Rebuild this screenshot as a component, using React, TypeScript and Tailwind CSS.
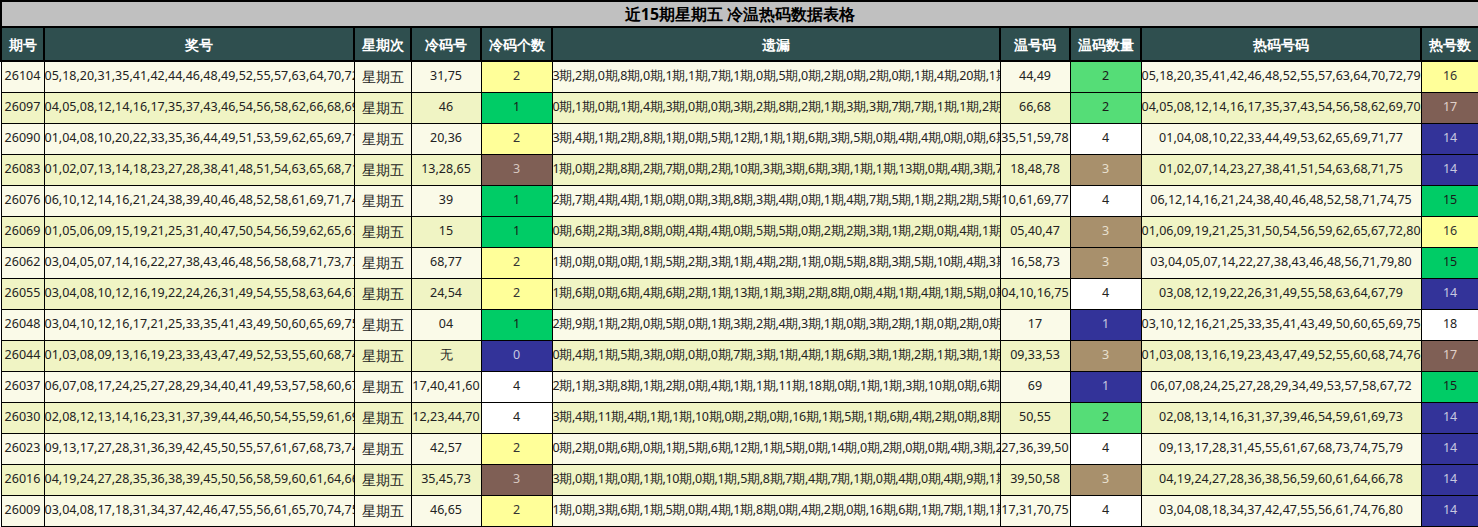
const rows: [string, string, string, string, number, string, string, number, string, number][] = [
  ["26104", "05,18,20,31,35,41,42,44,46,48,49,52,55,57,63,64,70,72,75,79", "31,75", "2", 0, "3期,2期,0期,8期,0期,1期,1期,7期,1期,0期,5期,0期,2期,0期,2期,0期,1期,4期,20期,1期", "44,49", 2, "05,18,20,35,41,42,46,48,52,55,57,63,64,70,72,79", 16],
  ["26097", "04,05,08,12,14,16,17,35,37,43,46,54,56,58,62,66,68,69,70,74", "46", "1", 0, "0期,1期,0期,1期,4期,3期,0期,0期,3期,2期,8期,2期,1期,3期,3期,7期,7期,1期,1期,2期", "66,68", 2, "04,05,08,12,14,16,17,35,37,43,54,56,58,62,69,70,74", 17],
  ["26090", "01,04,08,10,20,22,33,35,36,44,49,51,53,59,62,65,69,71,77,78", "20,36", "2", 0, "3期,4期,1期,2期,8期,1期,0期,5期,12期,1期,1期,6期,3期,5期,0期,4期,4期,0期,0期,6期", "35,51,59,78", 4, "01,04,08,10,22,33,44,49,53,62,65,69,71,77", 14],
  ["26083", "01,02,07,13,14,18,23,27,28,38,41,48,51,54,63,65,68,71,75,78", "13,28,65", "3", 0, "1期,0期,2期,8期,2期,7期,0期,2期,10期,3期,3期,6期,3期,1期,1期,13期,0期,4期,3期,7期", "18,48,78", 3, "01,02,07,14,23,27,38,41,51,54,63,68,71,75", 14],
  ["26076", "06,10,12,14,16,21,24,38,39,40,46,48,52,58,61,69,71,74,75,77", "39", "1", 0, "2期,7期,4期,4期,1期,0期,0期,3期,8期,3期,4期,0期,1期,4期,7期,5期,1期,2期,2期,5期", "10,61,69,77", 4, "06,12,14,16,21,24,38,40,46,48,52,58,71,74,75", 15],
  ["26069", "01,05,06,09,15,19,21,25,31,40,47,50,54,56,59,62,65,67,72,80", "15", "1", 0, "0期,6期,2期,3期,8期,0期,4期,4期,0期,5期,5期,0期,2期,2期,3期,1期,2期,0期,4期,1期", "05,40,47", 3, "01,06,09,19,21,25,31,50,54,56,59,62,65,67,72,80", 16],
  ["26062", "03,04,05,07,14,16,22,27,38,43,46,48,56,58,68,71,73,77,79,80", "68,77", "2", 0, "1期,0期,0期,0期,1期,5期,2期,3期,1期,4期,2期,1期,0期,5期,8期,3期,5期,10期,4期,3期", "16,58,73", 3, "03,04,05,07,14,22,27,38,43,46,48,56,71,79,80", 15],
  ["26055", "03,04,08,10,12,16,19,22,24,26,31,49,54,55,58,63,64,67,75,79", "24,54", "2", 0, "1期,6期,0期,6期,4期,6期,2期,1期,13期,1期,3期,2期,8期,0期,4期,1期,4期,1期,5期,0期", "04,10,16,75", 4, "03,08,12,19,22,26,31,49,55,58,63,64,67,79", 14],
  ["26048", "03,04,10,12,16,17,21,25,33,35,41,43,49,50,60,65,69,75,76,80", "04", "1", 0, "2期,9期,1期,2期,0期,5期,0期,1期,3期,2期,4期,3期,1期,0期,3期,2期,1期,0期,2期,0期", "17", 1, "03,10,12,16,21,25,33,35,41,43,49,50,60,65,69,75,76,80", 18],
  ["26044", "01,03,08,09,13,16,19,23,33,43,47,49,52,53,55,60,68,74,76,79", "无", "0", 0, "0期,4期,1期,5期,3期,0期,0期,0期,7期,3期,1期,4期,1期,6期,3期,1期,2期,1期,3期,1期", "09,33,53", 3, "01,03,08,13,16,19,23,43,47,49,52,55,60,68,74,76,79", 17],
  ["26037", "06,07,08,17,24,25,27,28,29,34,40,41,49,53,57,58,60,67,69,72", "17,40,41,60", "4", 0, "2期,1期,3期,8期,1期,2期,0期,4期,1期,1期,11期,18期,0期,1期,1期,3期,10期,0期,6期,1期", "69", 1, "06,07,08,24,25,27,28,29,34,49,53,57,58,67,72", 15],
  ["26030", "02,08,12,13,14,16,23,31,37,39,44,46,50,54,55,59,61,69,70,73", "12,23,44,70", "4", 0, "3期,4期,11期,4期,1期,1期,10期,0期,2期,0期,16期,1期,5期,1期,6期,4期,2期,0期,8期,0期", "50,55", 2, "02,08,13,14,16,31,37,39,46,54,59,61,69,73", 14],
  ["26023", "09,13,17,27,28,31,36,39,42,45,50,55,57,61,67,68,73,74,75,79", "42,57", "2", 0, "0期,2期,0期,6期,0期,1期,5期,6期,12期,1期,5期,0期,14期,0期,2期,0期,0期,4期,3期,2期", "27,36,39,50", 4, "09,13,17,28,31,45,55,61,67,68,73,74,75,79", 14],
  ["26016", "04,19,24,27,28,35,36,38,39,45,50,56,58,59,60,61,64,66,73,78", "35,45,73", "3", 0, "3期,0期,1期,0期,1期,10期,0期,1期,5期,8期,7期,4期,7期,1期,0期,4期,0期,4期,9期,1期", "39,50,58", 3, "04,19,24,27,28,36,38,56,59,60,61,64,66,78", 14],
  ["26009", "03,04,08,17,18,31,34,37,42,46,47,55,56,61,65,70,74,75,76,80", "46,65", "2", 0, "1期,0期,3期,6期,1期,5期,0期,4期,1期,8期,0期,4期,2期,0期,16期,6期,1期,7期,1期,1期", "17,31,70,75", 4, "03,04,08,18,34,37,42,47,55,56,61,74,76,80", 14],
];

const coldColor: Record<string, string> = {
  "0": "bg-[#333399] text-[#c8c8e0]",
  "1": "bg-[#00cc66] text-[#1a1a1a]",
  "2": "bg-[#ffff99] text-[#333333]",
  "3": "bg-[#7f5f55] text-[#d8c8c0]",
  "4": "bg-white text-[#222222]",
};
const warmColor: Record<number, string> = {
  1: "bg-[#333399] text-[#c8c8e0]",
  2: "bg-[#55dd77] text-[#1a1a1a]",
  3: "bg-[#a8906c] text-[#e8e0d0]",
  4: "bg-white text-[#222222]",
};
const hotColor: Record<number, string> = {
  14: "bg-[#333399] text-[#c8c8e0]",
  15: "bg-[#00cc66] text-[#1a1a1a]",
  16: "bg-[#ffff99] text-[#333333]",
  17: "bg-[#7f5f55] text-[#e0d0c8]",
  18: "bg-white text-[#222222]",
};

const headers = ["期号", "奖号", "星期次", "冷码号", "冷码个数", "遗漏", "温号码", "温码数量", "热码号码", "热号数"];
const widths = [43, 310, 57, 70, 71, 448, 70, 71, 280, 58];

export default function App() {
  const cell = "border border-black text-center align-middle px-0 whitespace-nowrap overflow-hidden";
  return (
    <div className="w-[1478px] h-[527px] overflow-hidden bg-white [font-family:'Liberation_Serif','Noto_Sans_CJK_SC',serif] text-[12.5px] text-[#222]">
      <table className="w-[1478px] table-fixed border-collapse">
        <colgroup>
          {widths.map((w, i) => (
            <col key={i} style={{ width: w }} />
          ))}
        </colgroup>
        <thead>
          <tr className="h-[26px]">
            <th colSpan={10} className="border-2 border-black bg-[#c0c0c0] text-[16px] font-bold text-black [font-family:'Liberation_Sans','Noto_Sans_CJK_SC',sans-serif]">
              近15期星期五 冷温热码数据表格
            </th>
          </tr>
          <tr className="h-[34px]">
            {headers.map((h) => (
              <th key={h} className="border-2 border-black bg-[#2f4f4f] text-white text-[14px] font-bold [font-family:'Noto_Sans_CJK_SC',sans-serif]">
                {h}
              </th>
            ))}
          </tr>
        </thead>
        <tbody>
          {rows.map((r, i) => {
            const bg = i % 2 === 0 ? "bg-[#fafae8]" : "bg-[#f0f4c4]";
            return (
              <tr key={r[0]} className={`h-[31px] ${bg}`}>
                <td className={cell}>{r[0]}</td>
                <td className={cell}>{r[1]}</td>
                <td className={`${cell} text-[14px] [font-family:'Noto_Sans_CJK_SC',sans-serif]`}>星期五</td>
                <td className={cell}>{r[2]}</td>
                <td className={`${cell} ${coldColor[r[3]]}`}>{r[3]}</td>
                <td className={`${cell} tracking-[-0.3px]`}>{r[5]}</td>
                <td className={cell}>{r[6]}</td>
                <td className={`${cell} ${warmColor[r[7]]}`}>{r[7]}</td>
                <td className={cell}>{r[8]}</td>
                <td className={`${cell} ${hotColor[r[9]]}`}>{r[9]}</td>
              </tr>
            );
          })}
        </tbody>
      </table>
    </div>
  );
}
